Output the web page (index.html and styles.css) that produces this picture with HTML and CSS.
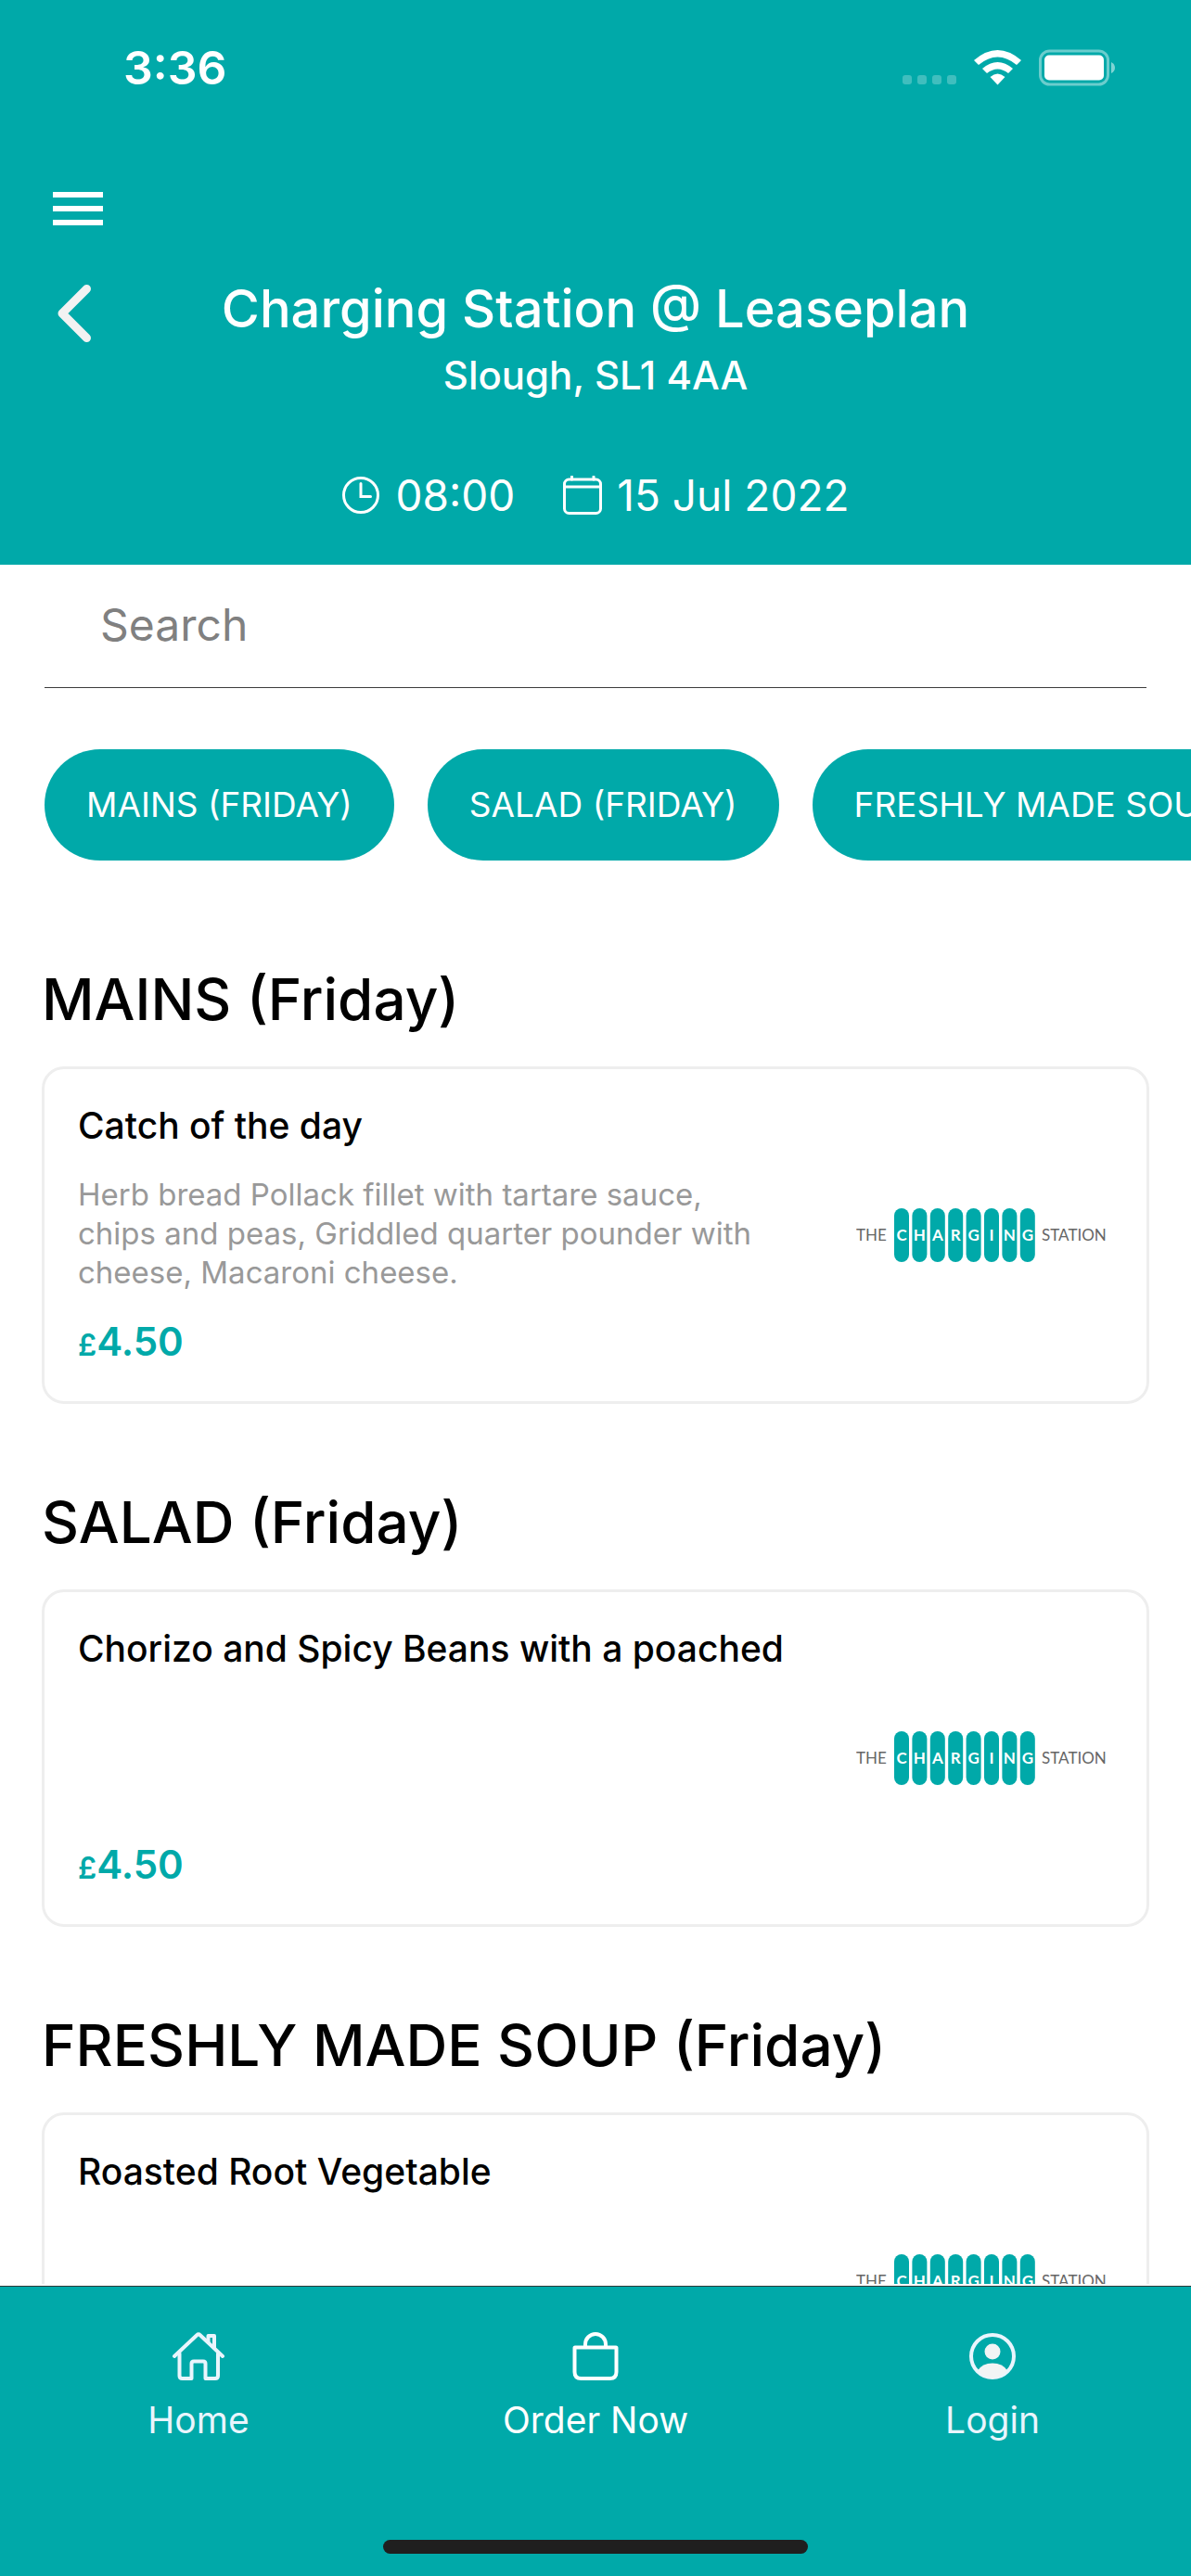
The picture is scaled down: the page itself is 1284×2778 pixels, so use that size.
FILE: index.html
```html
<!DOCTYPE html>
<html lang="en">
<head>
<meta charset="utf-8">
<meta name="viewport" content="width=device-width, initial-scale=1">
<title>Charging Station @ Leaseplan</title>
<link rel="stylesheet" href="styles.css">
</head>
<body>
<svg class="defs" aria-hidden="true">
  <symbol id="logo" viewBox="0 0 272 58">
    <g fill="#00a9a9">
      <rect x="41" width="16" height="58" rx="8"/>
      <rect x="60.4" width="16" height="58" rx="8"/>
      <rect x="79.8" width="16" height="58" rx="8"/>
      <rect x="99.2" width="16" height="58" rx="8"/>
      <rect x="118.6" width="16" height="58" rx="8"/>
      <rect x="138" width="16" height="58" rx="8"/>
      <rect x="157.4" width="16" height="58" rx="8"/>
      <rect x="176.8" width="16" height="58" rx="8"/>
    </g>
    <g class="logo-word">
      <text x="0" y="35">THE</text>
      <text x="200" y="35">STATION</text>
    </g>
    <g class="logo-letter">
      <text x="49" y="35">C</text>
      <text x="68.4" y="35">H</text>
      <text x="87.8" y="35">A</text>
      <text x="107.2" y="35">R</text>
      <text x="126.6" y="35">G</text>
      <text x="146" y="35">I</text>
      <text x="165.4" y="35">N</text>
      <text x="184.8" y="35">G</text>
    </g>
  </symbol>
</svg>

<div class="app">
  <header class="header">
    <div class="status">
      <span class="status-time">3:36</span>
      <svg class="status-icons" width="230" height="40" viewBox="0 0 230 40" aria-hidden="true">
        <g fill="#fff" fill-opacity=".25">
          <rect x="0" y="28" width="10" height="10" rx="3"/>
          <rect x="16" y="28" width="10" height="10" rx="3"/>
          <rect x="32" y="28" width="10" height="10" rx="3"/>
          <rect x="48" y="28" width="10" height="10" rx="3"/>
        </g>
        <g fill="#fff">
          <path d="M77 12Q102.500 -10 128 12L123 17Q102.500 0 82 17Z"/>
          <path d="M86 21Q102.500 7 119 21L114 26Q102.500 17 91 26Z"/>
          <path d="M94.500 30Q102.500 23 110.500 30L102.500 38.500Z"/>
          <rect x="153" y="6.500" width="64" height="27" rx="5"/>
        </g>
        <rect x="148.500" y="2" width="73" height="36" rx="10" fill="none" stroke="#fff" stroke-opacity=".42" stroke-width="3"/>
        <path d="M225 14Q229 16 229 20Q229 24 225 26Z" fill="#fff" fill-opacity=".5"/>
      </svg>
    </div>
    <div class="toolbar">
      <button class="icon-button" type="button" aria-label="Menu">
        <svg width="54" height="36" viewBox="0 0 54 36"><path d="M0 3H54M0 18H54M0 33H54" stroke="#fff" stroke-width="6"/></svg>
      </button>
    </div>
    <div class="venue">
      <button class="icon-button back" type="button" aria-label="Back">
        <svg width="54" height="64" viewBox="0 0 54 64"><path d="M36.500 5.500L10 32L36.500 58.500" fill="none" stroke="#f2f2f2" stroke-width="9" stroke-linecap="round" stroke-linejoin="round"/></svg>
      </button>
      <div class="venue-text">
        <h1 class="venue-name">Charging Station @ Leaseplan</h1>
        <p class="venue-address">Slough, SL1 4AA</p>
      </div>
    </div>
    <div class="slot">
      <span class="slot-item">
        <svg width="42" height="42" viewBox="0 0 42 42" fill="none" stroke="#fff" stroke-width="3" aria-hidden="true"><circle cx="21" cy="21" r="18.500"/><path d="M21 8.500V22.500H31.500" stroke-linecap="round"/></svg>
        <time>08:00</time>
      </span>
      <span class="slot-item">
        <svg width="42" height="42" viewBox="0 0 42 42" fill="none" stroke="#fff" stroke-width="3" aria-hidden="true"><rect x="1.500" y="4" width="39" height="36.500" rx="5"/><path d="M1.500 12H40.500M9.500 4V1M33 4V1" stroke-linecap="round"/></svg>
        <time>15 Jul 2022</time>
      </span>
    </div>
  </header>

  <main class="content">
    <form class="search" role="search">
      <input class="search-input" type="search" placeholder="Search" aria-label="Search">
    </form>
    <nav class="chips" aria-label="Menu sections">
      <button class="chip" type="button">MAINS (FRIDAY)</button>
      <button class="chip" type="button">SALAD (FRIDAY)</button>
      <button class="chip" type="button">FRESHLY MADE SOUP (FRIDAY)</button>
    </nav>
    <div class="menu">
      <section>
        <h2 class="section-title">MAINS (Friday)</h2>
        <article class="card">
          <div class="card-body">
            <h3 class="dish">Catch of the day</h3>
            <p class="description">Herb bread Pollack fillet with tartare sauce, chips and peas, Griddled quarter pounder with cheese, Macaroni cheese.</p>
            <p class="price"><span class="currency">£</span>4.50</p>
          </div>
          <svg class="logo" role="img" aria-label="The Charging Station"><use href="#logo"/></svg>
        </article>
      </section>
      <section>
        <h2 class="section-title">SALAD (Friday)</h2>
        <article class="card">
          <div class="card-body">
            <h3 class="dish">Chorizo and Spicy Beans with a poached</h3>
            <p class="price"><span class="currency">£</span>4.50</p>
          </div>
          <svg class="logo" role="img" aria-label="The Charging Station"><use href="#logo"/></svg>
        </article>
      </section>
      <section>
        <h2 class="section-title">FRESHLY MADE SOUP (Friday)</h2>
        <article class="card">
          <div class="card-body">
            <h3 class="dish">Roasted Root Vegetable</h3>
          </div>
          <svg class="logo" role="img" aria-label="The Charging Station"><use href="#logo"/></svg>
        </article>
      </section>
    </div>
  </main>

  <footer class="footer">
    <nav class="tabs" aria-label="Main">
      <a class="tab" href="#home">
        <svg width="56" height="56" viewBox="0 0 56 56" fill="none" stroke="#e9f5fd" stroke-width="4" stroke-linecap="round" stroke-linejoin="round" aria-hidden="true"><path d="M2 28L26.500 5Q28 3.500 29.500 5L54 28"/><path d="M7.500 25V49Q7.500 52 10.500 52H20.500V36Q20.500 33.500 23 33.500H33Q35.500 33.500 35.500 36V52H46Q49 52 49 49V25"/><path d="M38.500 13V6H45V19"/></svg>
        <span>Home</span>
      </a>
      <a class="tab active" href="#order">
        <svg width="56" height="56" viewBox="0 0 56 56" fill="none" stroke="#fff" stroke-width="4" aria-hidden="true"><path d="M6 18.500H50Q50.500 18.500 50.500 19V45Q50.500 52 43.500 52H12.500Q5.500 52 5.500 45V19Q5.500 18.500 6 18.500Z" stroke-linejoin="round"/><path d="M17 20V15A11 11 0 0 1 39 15V20"/></svg>
        <span>Order Now</span>
      </a>
      <a class="tab" href="#login">
        <svg width="56" height="56" viewBox="0 0 56 56" aria-hidden="true"><circle cx="28" cy="28" r="23" fill="none" stroke="#e9f5fd" stroke-width="4"/><circle cx="28" cy="23" r="8.500" fill="#f2f4f5"/><path d="M12 43.500Q17 35.500 28 35.500Q39 35.500 44 43.500Q37 52 28 52Q19 52 12 43.500Z" fill="#f2f4f5"/></svg>
        <span>Login</span>
      </a>
    </nav>
    <div class="home-indicator"></div>
  </footer>
</div>
</body>
</html>
```
FILE: styles.css
```css
:root {
  --teal: #00a9a9;
}

* {
  box-sizing: border-box;
}

body,
h1,
h2,
h3,
p {
  margin: 0;
}

body {
  background: #fff;
  color: #000;
  font-family: Inter, "Liberation Sans", sans-serif;
}

button,
input {
  font: inherit;
}

.defs {
  display: none;
}

.app {
  display: flex;
  flex-direction: column;
  height: 100vh;
}

/* Header */
.header {
  flex: none;
  padding-bottom: 45px;
  background: var(--teal);
  color: #fff;
}

.status {
  display: flex;
  align-items: center;
  justify-content: space-between;
  padding: 43px 81px 43px 133px;
}

.status-time {
  font-size: 50px;
  font-weight: 600;
  line-height: 60px;
}

.toolbar {
  display: flex;
  padding: 52px 57px 45px;
}

.icon-button {
  display: flex;
  align-items: center;
  justify-content: center;
  width: 54px;
  height: 54px;
  padding: 0;
  border: 0;
  background: none;
}

.venue {
  display: grid;
  grid-template-columns: 54px 1fr 54px;
  padding: 0 57px;
}

.back {
  height: 82px;
}

.venue-text {
  text-align: center;
}

.venue-name {
  font-size: 56px;
  font-weight: 500;
  line-height: 72px;
}

.venue-address {
  margin-top: 6px;
  font-size: 42px;
  font-weight: 500;
  line-height: 60px;
}

.slot {
  display: flex;
  justify-content: center;
  gap: 52px;
  margin-top: 69px;
  font-size: 46px;
  line-height: 60px;
}

.slot-item {
  display: flex;
  align-items: center;
  gap: 16px;
}

/* Scrolling content */
.content {
  flex: 1;
  min-height: 0;
  overflow: hidden auto;
  scrollbar-width: none;
}

.search {
  margin: 0 48px;
  padding: 35px 60px 37px;
  border-bottom: 1px solid #3c3c3c;
}

.search-input {
  display: block;
  width: 100%;
  height: 60px;
  padding: 0;
  border: 0;
  outline: 0;
  background: none;
  font-size: 48px;
  line-height: 60px;
}

.search-input::placeholder {
  color: #808080;
  opacity: 1;
}

.chips {
  display: flex;
  gap: 36px;
  margin-top: 66px;
  padding: 0 48px;
  overflow-x: auto;
  scrollbar-width: none;
}

.chip {
  flex: none;
  padding: 40px 45px;
  border: 0;
  border-radius: 60px;
  background: var(--teal);
  color: #fff;
  font-size: 37px;
  line-height: 40px;
}

.menu {
  display: flex;
  flex-direction: column;
  gap: 88px;
  padding: 110px 45px;
}

.section-title {
  margin-bottom: 32px;
  font-size: 62px;
  font-weight: 500;
  line-height: 80px;
}

.card {
  display: flex;
  align-items: center;
  gap: 88px;
  min-height: 364px;
  padding: 40px 41px 40px 36px;
  border: 3px solid #eee;
  border-radius: 24px;
}

.card-body {
  display: flex;
  flex: 1;
  flex-direction: column;
  align-self: stretch;
  min-width: 0;
}

.dish {
  font-size: 39px;
  font-weight: 500;
  line-height: 42px;
  white-space: nowrap;
}

.description {
  margin: 32px 0 30px;
  color: #999;
  font-size: 33px;
  line-height: 42px;
}

.price {
  margin-top: auto;
  color: var(--teal);
  font-size: 42px;
  font-weight: 600;
  line-height: 48px;
}

.currency {
  font-size: 32px;
  line-height: 32px;
}

.logo {
  flex: none;
  width: 272px;
  height: 58px;
}

.logo-word,
.logo-letter {
  font-family: Lato, sans-serif;
  font-size: 17px;
}

.logo-word {
  fill: #666;
}

.logo-letter {
  fill: #fff;
  font-weight: 700;
  text-anchor: middle;
}

/* Footer */
.footer {
  flex: none;
  margin-top: 2px;
  padding: 47px 0 24px;
  border-top: 1px solid #2b3a3a;
  background: var(--teal);
}

.tabs {
  display: grid;
  grid-template-columns: repeat(3, 1fr);
}

.tab {
  display: flex;
  flex-direction: column;
  align-items: center;
  gap: 17px;
  color: #e9f5fd;
  font-size: 39px;
  line-height: 48px;
  text-decoration: none;
}

.active {
  color: #fff;
}

.home-indicator {
  width: 458px;
  height: 15px;
  margin: 105px auto 0;
  border-radius: 8px;
  background: #1f1f1f;
}
```
